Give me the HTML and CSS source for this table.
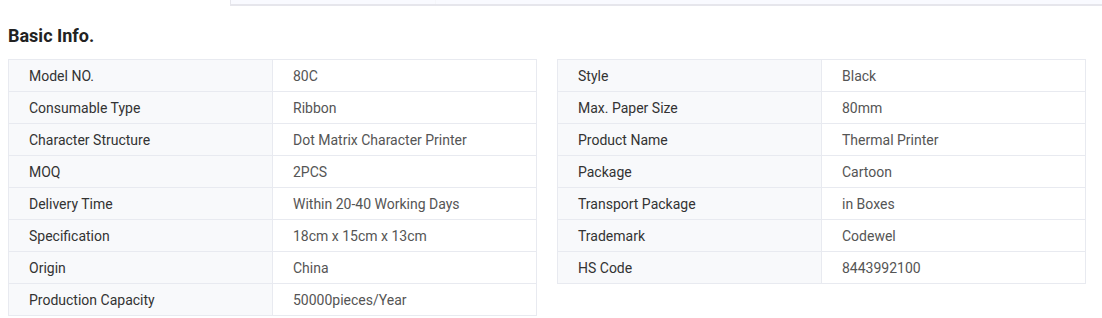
FILE: index.html
```html
<!DOCTYPE html>
<html>
<head>
<meta charset="utf-8">
<link rel="stylesheet" href="styles.css">
</head>
<body>
<div class="topbar"><div class="tab"></div><div class="tab tab-rest"></div></div>
<h2 class="title">Basic Info.</h2>
<div class="tables">
  <table class="info">
    <tr><td class="k">Model NO.</td><td class="v">80C</td></tr>
    <tr><td class="k">Consumable Type</td><td class="v">Ribbon</td></tr>
    <tr><td class="k">Character Structure</td><td class="v">Dot Matrix Character Printer</td></tr>
    <tr><td class="k">MOQ</td><td class="v">2PCS</td></tr>
    <tr><td class="k">Delivery Time</td><td class="v">Within 20-40 Working Days</td></tr>
    <tr><td class="k">Specification</td><td class="v">18cm x 15cm x 13cm</td></tr>
    <tr><td class="k">Origin</td><td class="v">China</td></tr>
    <tr><td class="k">Production Capacity</td><td class="v">50000pieces/Year</td></tr>
  </table>
  <table class="info">
    <tr><td class="k">Style</td><td class="v">Black</td></tr>
    <tr><td class="k">Max. Paper Size</td><td class="v">80mm</td></tr>
    <tr><td class="k">Product Name</td><td class="v">Thermal Printer</td></tr>
    <tr><td class="k">Package</td><td class="v">Cartoon</td></tr>
    <tr><td class="k">Transport Package</td><td class="v">in Boxes</td></tr>
    <tr><td class="k">Trademark</td><td class="v">Codewel</td></tr>
    <tr><td class="k">HS Code</td><td class="v">8443992100</td></tr>
  </table>
</div>
</body>
</html>
```
FILE: styles.css
```css
* { box-sizing: border-box; }
html, body { margin: 0; padding: 0; background: #fff; }
body { font-family: Roboto, "Liberation Sans", Arial, sans-serif; }
.topbar {
  margin-left: 230px;
  height: 6px;
  display: flex;
  background: #f9faff;
  border-left: 1px solid #e6e6ec;
  border-bottom: 2px solid #e6e6ec;
}
.tab { width: 205px; border-right: 1px solid #f5f6fa; }
.tab-rest { flex: 1; border-right: none; }
.title {
  margin: 0;
  padding: 0 8px;
  margin-top: 19px;
  font-size: 18px;
  line-height: 22px;
  font-weight: 700;
  color: #222;
}
.tables {
  display: flex;
  align-items: flex-start;
  gap: 20px;
  padding-left: 8px;
  margin-top: 12px;
}
.info {
  width: 529px;
  border-collapse: collapse;
  font-size: 14px;
  table-layout: fixed;
}
.info td {
  border: 1px solid #e8eaf0;
  height: 32px;
  padding: 0 0 0 20px;
  vertical-align: middle;
  white-space: nowrap;
}
.info td.k { width: 264px; background: #f8f9fb; color: #333; }
.info td.v { background: #fff; color: #555; }
```
